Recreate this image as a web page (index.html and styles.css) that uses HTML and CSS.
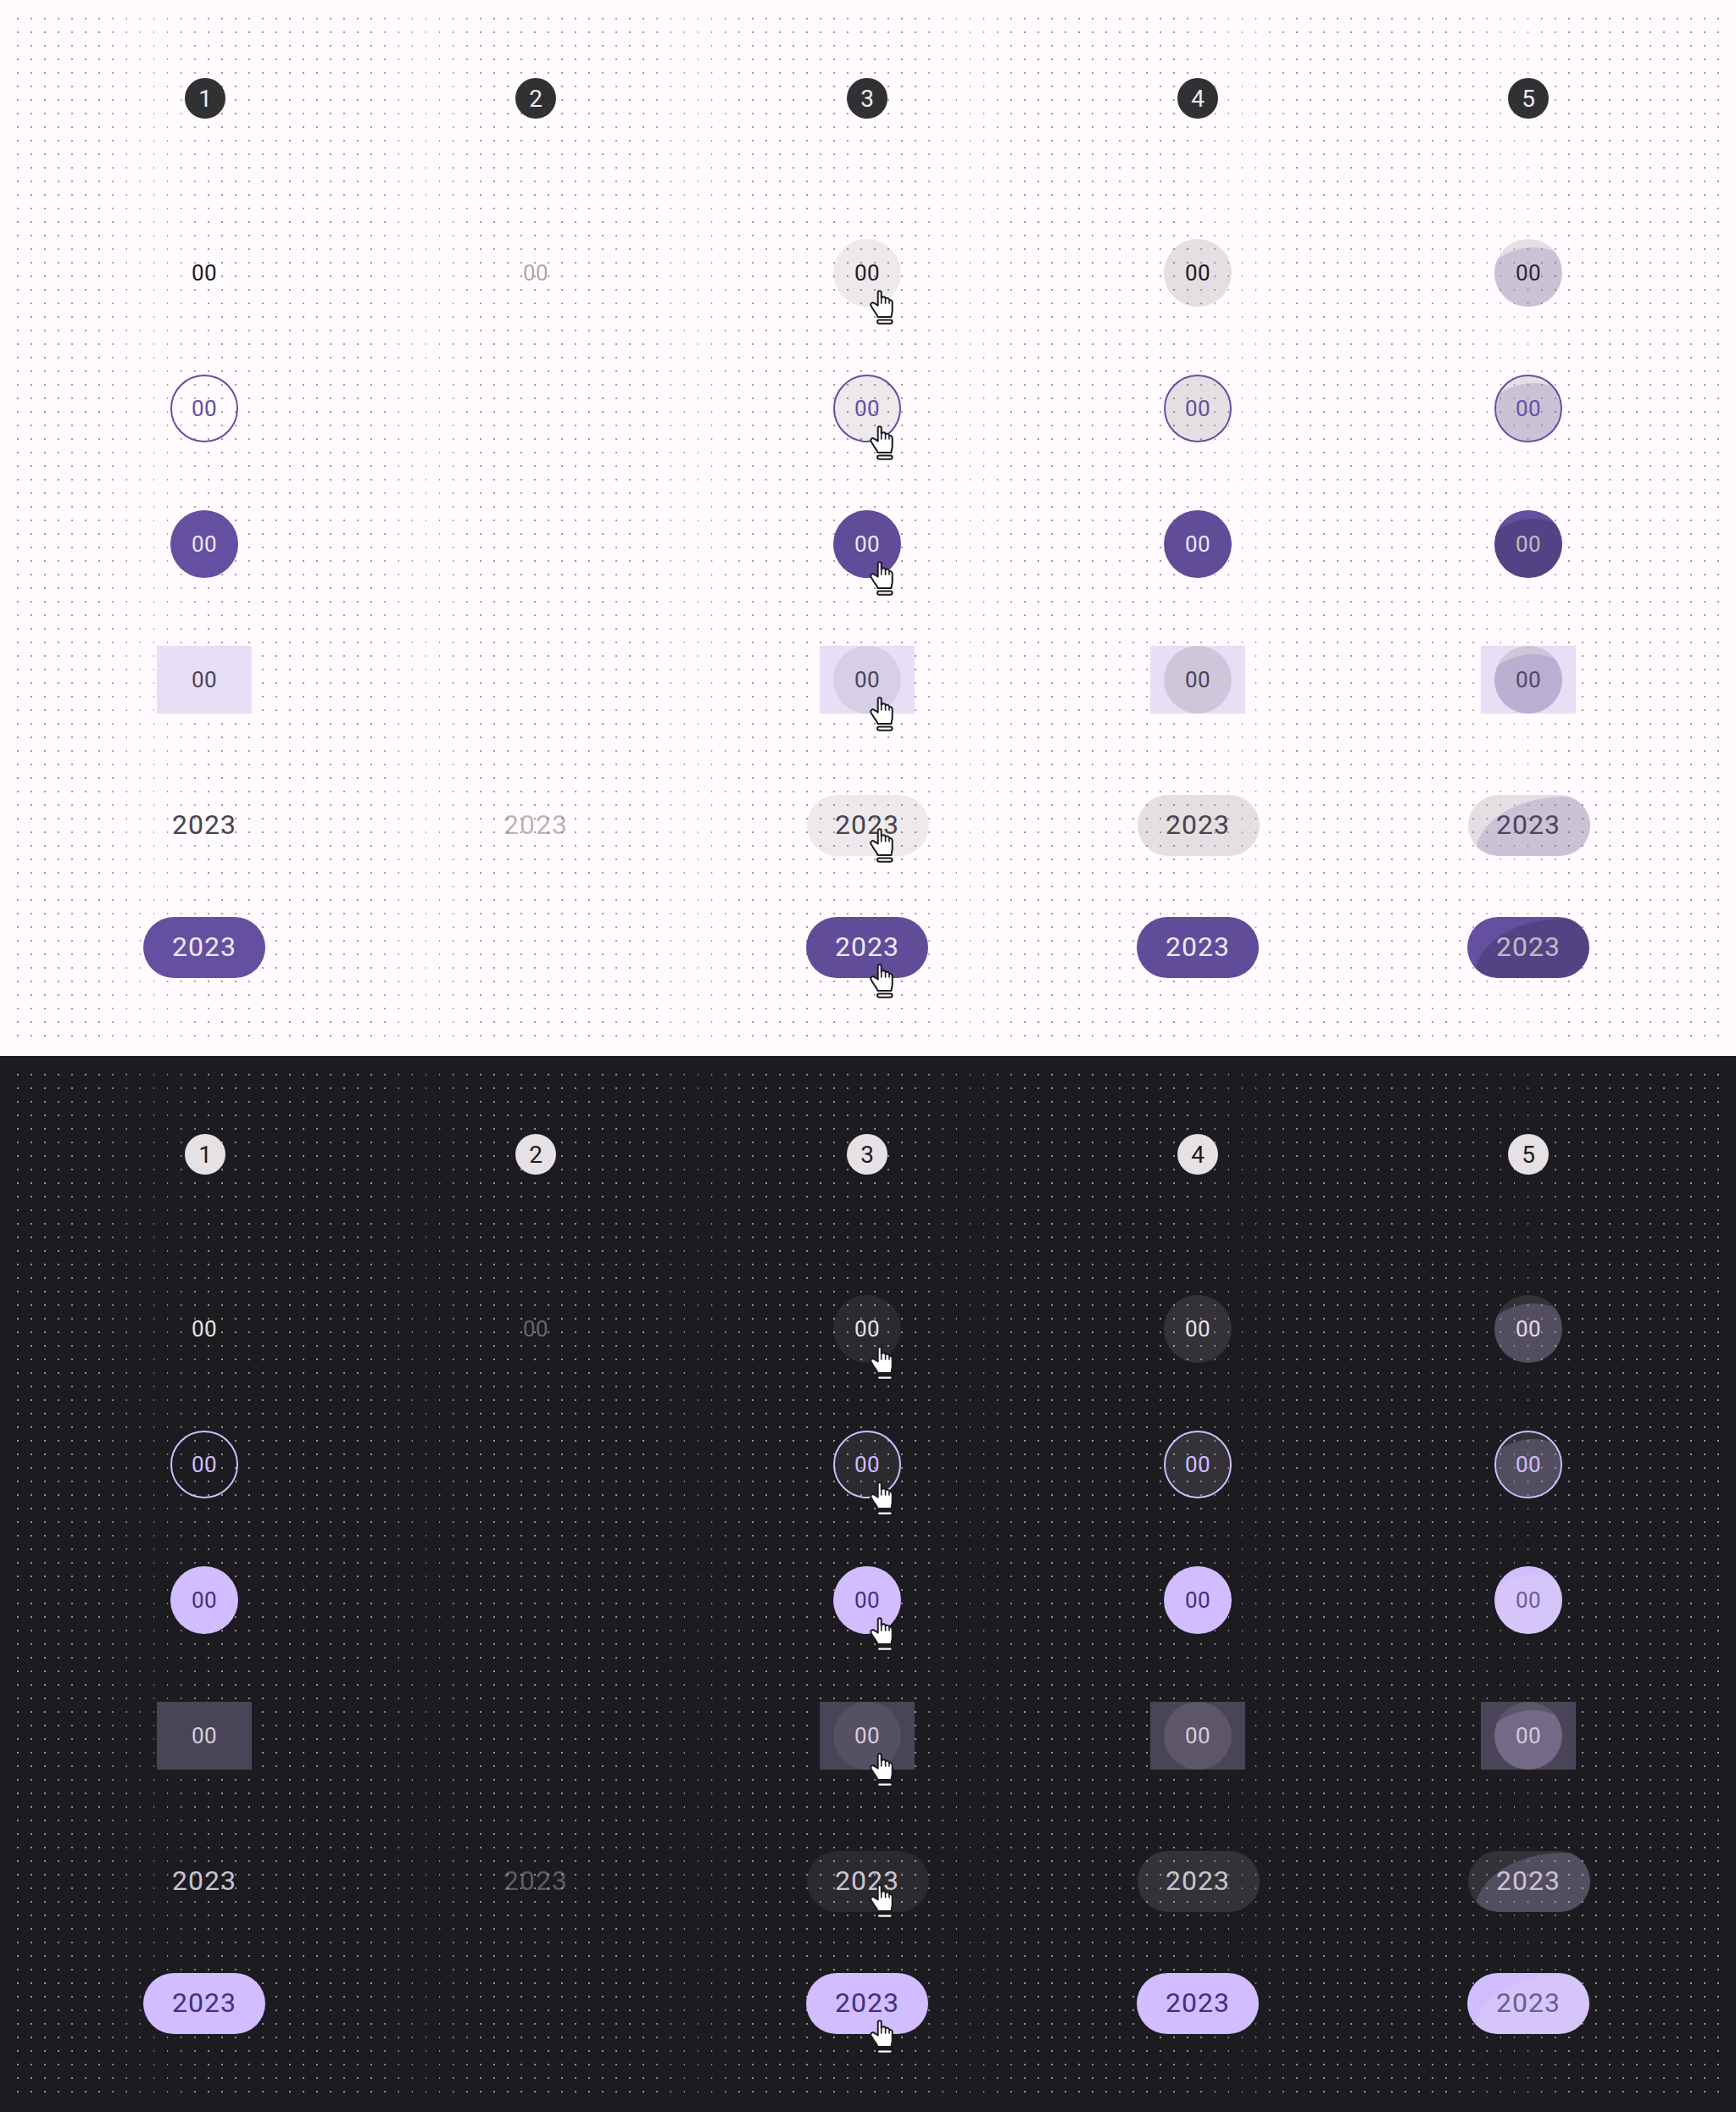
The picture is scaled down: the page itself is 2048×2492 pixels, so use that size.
FILE: index.html
```html
<!DOCTYPE html>
<html lang="en">
  <head>
    <meta charset="UTF-8" />
    <title>Date picker states</title>
    <link rel="stylesheet" href="styles.css">
  </head>
  <body>
    <svg class="defs" width="0" height="0">
      <symbol id="hand" viewBox="0 0 28 41">
        <path class="hand-fill" d="M9.7 18.5V3C9.7.6 13.7.6 13.7 3V9.5C16 7.6 18.5 8 18.6 10C20.5 9.2 23 9.8 23.2 12C25 11.6 26.7 12.6 26.7 15V24.5C26.7 27 25.5 29 25.5 32H9.5C8.5 29 7 27.5 5 24.5L1.6 19C.2 16.5 3.2 14 5.2 15.6Z" />
        <path class="hand-line" d="M13.7 9.5V16M18.6 10V16M23 12V16" />
        <rect class="hand-fill" x="9" y="35.5" width="17.6" height="4.2" rx="2.1" />
      </symbol>
    </svg>

    <section class="panel light">
      <div class="board">
        <div class="row row-head">
          <div class="cell"><span class="badge badge-first">1</span></div>
          <div class="cell"><span class="badge">2</span></div>
          <div class="cell"><span class="badge">3</span></div>
          <div class="cell"><span class="badge">4</span></div>
          <div class="cell"><span class="badge badge-last">5</span></div>
        </div>

        <div class="row">
          <div class="cell"><div class="day">00</div></div>
          <div class="cell"><div class="day disabled">00</div></div>
          <div class="cell"><div class="day is-hover">00</div><svg class="cursor"><use href="#hand" /></svg></div>
          <div class="cell"><div class="day is-focus">00</div></div>
          <div class="cell"><div class="day is-focus">00<span class="ripple"></span></div></div>
        </div>

        <div class="row">
          <div class="cell"><div class="day day-outline">00</div></div>
          <div class="cell"></div>
          <div class="cell"><div class="day day-outline is-hover">00</div><svg class="cursor"><use href="#hand" /></svg></div>
          <div class="cell"><div class="day day-outline is-focus">00</div></div>
          <div class="cell"><div class="day day-outline is-focus">00<span class="ripple"></span></div></div>
        </div>

        <div class="row">
          <div class="cell"><div class="day day-filled">00</div></div>
          <div class="cell"></div>
          <div class="cell"><div class="day day-filled is-dimmed">00</div><svg class="cursor"><use href="#hand" /></svg></div>
          <div class="cell"><div class="day day-filled is-dimmed">00</div></div>
          <div class="cell"><div class="day day-filled">00<span class="ripple"></span></div></div>
        </div>

        <div class="row row-tonal">
          <div class="cell"><div class="range"><div class="day day-tonal">00</div></div></div>
          <div class="cell"></div>
          <div class="cell"><div class="range"><div class="day day-tonal is-hover">00</div></div><svg class="cursor"><use href="#hand" /></svg></div>
          <div class="cell"><div class="range"><div class="day day-tonal is-focus">00</div></div></div>
          <div class="cell"><div class="range"><div class="day day-tonal is-focus">00<span class="ripple"></span></div></div></div>
        </div>

        <div class="row row-pill">
          <div class="cell"><div class="year">2023</div></div>
          <div class="cell"><div class="year disabled">2023</div></div>
          <div class="cell"><div class="year is-hover">2023</div><svg class="cursor cursor-year"><use href="#hand" /></svg></div>
          <div class="cell"><div class="year is-focus">2023</div></div>
          <div class="cell"><div class="year is-focus">2023<span class="ripple"></span></div></div>
        </div>

        <div class="row row-pill">
          <div class="cell"><div class="year year-filled">2023</div></div>
          <div class="cell"></div>
          <div class="cell"><div class="year year-filled is-dimmed">2023</div><svg class="cursor cursor-year-filled"><use href="#hand" /></svg></div>
          <div class="cell"><div class="year year-filled is-dimmed">2023</div></div>
          <div class="cell"><div class="year year-filled">2023<span class="ripple"></span></div></div>
        </div>
      </div>
    </section>

    <section class="panel dark">
      <div class="board">
        <div class="row row-head">
          <div class="cell"><span class="badge badge-first">1</span></div>
          <div class="cell"><span class="badge">2</span></div>
          <div class="cell"><span class="badge">3</span></div>
          <div class="cell"><span class="badge">4</span></div>
          <div class="cell"><span class="badge badge-last">5</span></div>
        </div>

        <div class="row">
          <div class="cell"><div class="day">00</div></div>
          <div class="cell"><div class="day disabled">00</div></div>
          <div class="cell"><div class="day is-hover">00</div><svg class="cursor"><use href="#hand" /></svg></div>
          <div class="cell"><div class="day is-focus">00</div></div>
          <div class="cell"><div class="day is-focus">00<span class="ripple"></span></div></div>
        </div>

        <div class="row">
          <div class="cell"><div class="day day-outline">00</div></div>
          <div class="cell"></div>
          <div class="cell"><div class="day day-outline is-hover">00</div><svg class="cursor"><use href="#hand" /></svg></div>
          <div class="cell"><div class="day day-outline is-focus">00</div></div>
          <div class="cell"><div class="day day-outline is-focus">00<span class="ripple"></span></div></div>
        </div>

        <div class="row">
          <div class="cell"><div class="day day-filled">00</div></div>
          <div class="cell"></div>
          <div class="cell"><div class="day day-filled is-dimmed">00</div><svg class="cursor"><use href="#hand" /></svg></div>
          <div class="cell"><div class="day day-filled is-dimmed">00</div></div>
          <div class="cell"><div class="day day-filled">00<span class="ripple"></span></div></div>
        </div>

        <div class="row row-tonal">
          <div class="cell"><div class="range"><div class="day day-tonal">00</div></div></div>
          <div class="cell"></div>
          <div class="cell"><div class="range"><div class="day day-tonal is-hover">00</div></div><svg class="cursor"><use href="#hand" /></svg></div>
          <div class="cell"><div class="range"><div class="day day-tonal is-focus">00</div></div></div>
          <div class="cell"><div class="range"><div class="day day-tonal is-focus">00<span class="ripple"></span></div></div></div>
        </div>

        <div class="row row-pill">
          <div class="cell"><div class="year">2023</div></div>
          <div class="cell"><div class="year disabled">2023</div></div>
          <div class="cell"><div class="year is-hover">2023</div><svg class="cursor cursor-year"><use href="#hand" /></svg></div>
          <div class="cell"><div class="year is-focus">2023</div></div>
          <div class="cell"><div class="year is-focus">2023<span class="ripple"></span></div></div>
        </div>

        <div class="row row-pill">
          <div class="cell"><div class="year year-filled">2023</div></div>
          <div class="cell"></div>
          <div class="cell"><div class="year year-filled is-dimmed">2023</div><svg class="cursor cursor-year-filled"><use href="#hand" /></svg></div>
          <div class="cell"><div class="year year-filled is-dimmed">2023</div></div>
          <div class="cell"><div class="year year-filled">2023<span class="ripple"></span></div></div>
        </div>
      </div>
    </section>
  </body>
</html>
```
FILE: styles.css
```css
body {
  margin: 0;
  font-family: Roboto, "Liberation Sans", sans-serif;
}

.defs {
  position: absolute;
}

.light {
  --surface: #fffbfe;
  --dot: #9c9a9d;
  --on-surface: #1d1b20;
  --on-variant: #46444b;
  --primary: #654fa0;
  --primary-dim: #604c98;
  --on-primary: #ece8f2;
  --tonal: #e7dff6;
  --on-tonal: #4a4458;
  --badge: #313033;
  --on-badge: #f0edf1;
  --hover: rgba(29, 27, 32, 0.08);
  --focus: rgba(29, 27, 32, 0.12);
  --ripple: rgba(103, 80, 164, 0.2);
  --ripple-filled: rgba(29, 27, 32, 0.22);
}

.dark {
  --surface: #1c1b20;
  --dot: #949396;
  --on-surface: #e6e1e5;
  --on-variant: #cac4d0;
  --primary: #d1bdff;
  --primary-dim: #d1bdff;
  --on-primary: #43307c;
  --tonal: #4a4458;
  --on-tonal: #d4cfdb;
  --badge: #e6e1e5;
  --on-badge: #1c1b20;
  --hover: rgba(230, 225, 229, 0.08);
  --focus: rgba(230, 225, 229, 0.12);
  --ripple: rgba(208, 188, 255, 0.2);
  --ripple-filled: rgba(230, 225, 229, 0.25);
}

.panel {
  height: 1246px;
  padding: 20px;
  box-sizing: border-box;
  background: var(--surface);
}

.board {
  position: relative;
  isolation: isolate;
  height: 1206px;
  padding: 72px 0 0 26px;
  box-sizing: border-box;
}

/* dot grid, columns land on 16.05px so gradients instead of a tile */
.board::before {
  content: "";
  position: absolute;
  inset: 0;
  z-index: -1;
  background: repeating-linear-gradient(
    90deg,
    transparent 0,
    var(--dot) 0.2px,
    var(--dot) 1.8px,
    transparent 2px,
    transparent 16.05px
  );
  -webkit-mask-image: repeating-linear-gradient(
    180deg,
    transparent 0,
    transparent 1px,
    #000 1.2px,
    #000 2.8px,
    transparent 3px,
    transparent 16px
  );
  mask-image: repeating-linear-gradient(
    180deg,
    transparent 0,
    transparent 1px,
    #000 1.2px,
    #000 2.8px,
    transparent 3px,
    transparent 16px
  );
}

.row {
  display: grid;
  grid-template-columns: 390px 392px 390px 390px 390px;
  height: 80px;
  margin-bottom: 80px;
}

.row-head {
  height: 48px;
  margin-bottom: 142px;
}

.row-tonal {
  margin-bottom: 96px;
}

.row-pill {
  height: 72px;
  margin-bottom: 72px;
}

.cell {
  position: relative;
  display: flex;
  justify-content: center;
  align-items: center;
}

.badge {
  display: flex;
  justify-content: center;
  align-items: center;
  width: 48px;
  height: 48px;
  border-radius: 50%;
  background: var(--badge);
  color: var(--on-badge);
  font-size: 28px;
  font-weight: 400;
}

.badge-first {
  margin-left: 2px;
}

.day,
.year {
  position: relative;
  display: flex;
  justify-content: center;
  align-items: center;
  box-sizing: border-box;
  overflow: hidden;
}

.day {
  width: 80px;
  height: 80px;
  border-radius: 50%;
  font-size: 26px;
  letter-spacing: 0.5px;
  color: var(--on-surface);
}

.year {
  width: 144px;
  height: 72px;
  margin-left: 2px;
  padding-right: 2px;
  padding-bottom: 2px;
  border-radius: 36px;
  font-size: 32px;
  letter-spacing: 1px;
  color: var(--on-variant);
}

.disabled {
  opacity: 0.38;
}

.is-hover {
  background-color: var(--hover);
}

.is-focus {
  background-color: var(--focus);
}

.day-outline {
  border: 2px solid var(--primary);
  color: var(--primary);
}

.day-filled,
.year-filled {
  background-color: var(--primary);
  color: var(--on-primary);
}

.year-filled {
  margin-left: 0;
  padding-right: 0;
}

.is-dimmed {
  background-color: var(--primary-dim);
}

.day-tonal {
  color: var(--on-tonal);
}

.range {
  display: flex;
  justify-content: center;
  width: 112px;
  height: 80px;
  background: var(--tonal);
}

/* press ripple, caught part way across the shape */
.ripple {
  position: absolute;
  top: 10px;
  left: -26px;
  width: 144px;
  height: 144px;
  border-radius: 50%;
  background: var(--ripple);
}

.day-outline .ripple {
  top: 8px;
  left: -28px;
}

.year .ripple {
  top: 2px;
  left: 8px;
  width: 210px;
  height: 140px;
}

.day-filled .ripple,
.year-filled .ripple {
  background: var(--ripple-filled);
}

.cursor {
  position: absolute;
  top: 60px;
  left: calc(50% + 3px);
  width: 28px;
  height: 41px;
}

.cursor-year {
  top: 39px;
}

.cursor-year-filled {
  top: 55px;
}

.hand-fill {
  fill: #fff;
  stroke: #1c1b1f;
  stroke-width: 2;
  stroke-linejoin: round;
}

.hand-line {
  fill: none;
  stroke: #1c1b1f;
  stroke-width: 1.6;
  stroke-linecap: round;
}
```
